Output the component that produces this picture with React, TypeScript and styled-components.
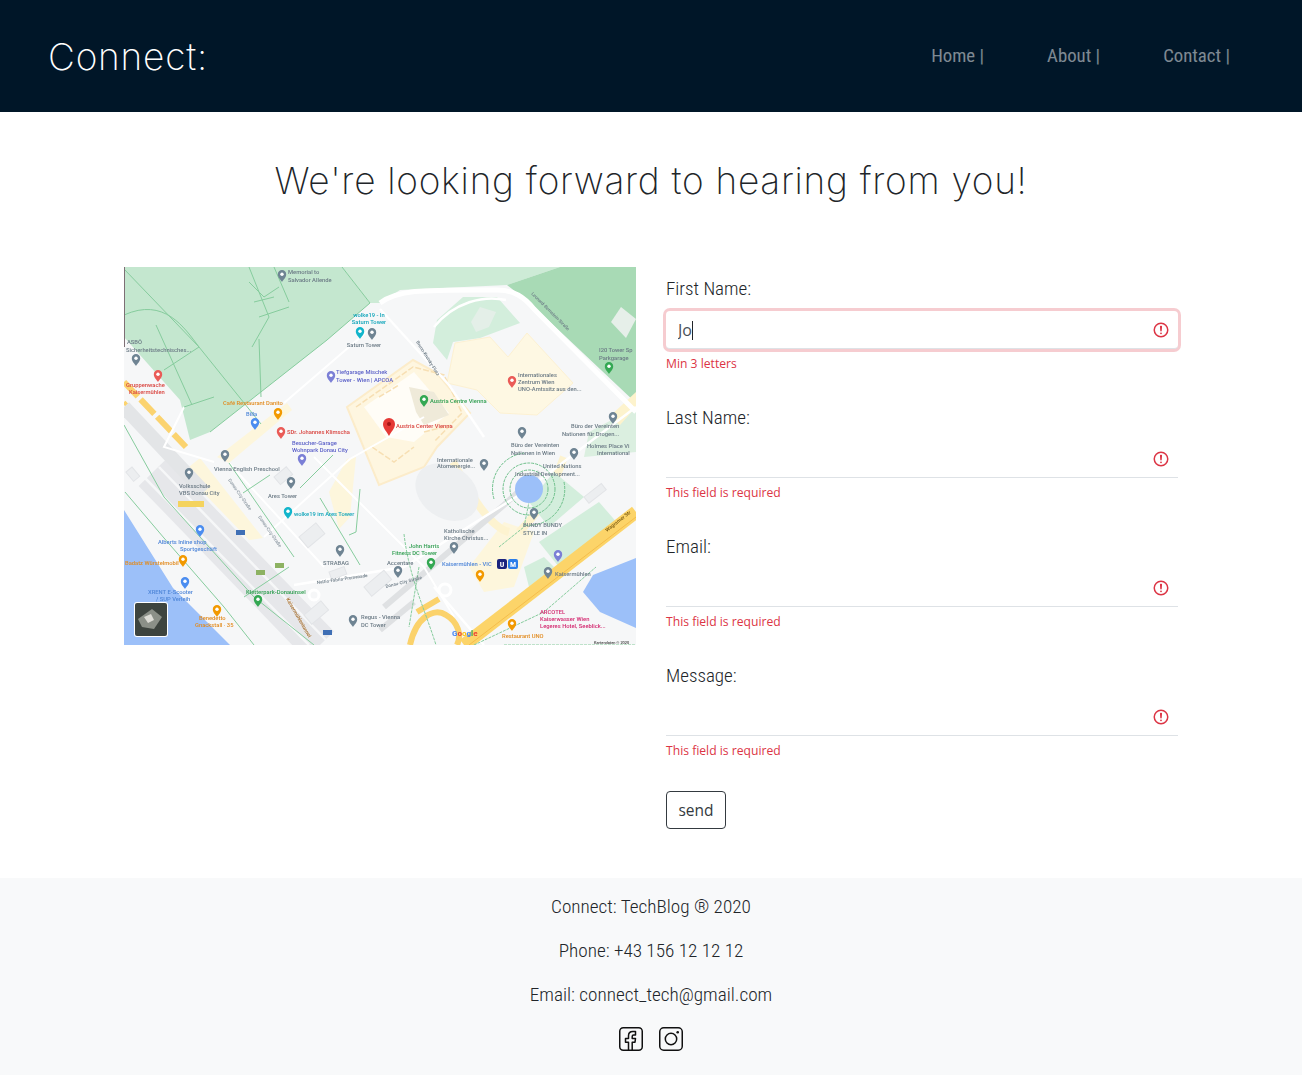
import React from "react";
import styled, { createGlobalStyle } from "styled-components";

const Global = createGlobalStyle`
  html, body { margin: 0; padding: 0; background: #fff; }
  body { font-family: "Roboto", sans-serif; font-weight: 300; font-stretch: 80%; color: #212529; }
  * { box-sizing: border-box; }
`;

const Header = styled.header`
  height: 112px;
  background: #001628;
  display: flex;
  align-items: center;
  justify-content: space-between;
  padding: 0 72px 0 48px;
`;
const Brand = styled.a`
  font-family: "Inter", sans-serif;
  font-weight: 200;
  font-stretch: normal;
  font-size: 37px;
  letter-spacing: 0.8px;
  color: #fff;
`;
const Nav = styled.nav`
  display: flex;
  gap: 63px;
`;
const NavItem = styled.a`
  font-size: 18.8px;
  font-weight: 400;
  color: rgba(255, 255, 255, 0.5);
`;
const Title = styled.h1`
  margin: 0;
  padding-top: 46px;
  height: 155px;
  text-align: center;
  font-family: "Inter", sans-serif;
  font-weight: 200;
  font-stretch: normal;
  font-size: 37px;
  letter-spacing: 0.72px;
  line-height: 46px;
  color: #212529;
`;
const Content = styled.main`
  display: grid;
  grid-template-columns: 512px 512px;
  column-gap: 30px;
  justify-content: center;
  height: 611px;
`;
const MapSvg = styled.svg`
  display: block;
  width: 512px;
  height: 378px;
  filter: blur(0.4px);
`;
const Form = styled.form`
  display: flex;
  flex-direction: column;
`;
const Group = styled.div`
  height: 129px;
  display: flex;
  flex-direction: column;
  padding-top: 10px;
`;
const Label = styled.label`
  font-size: 19px;
  line-height: 24px;
  margin-bottom: 10px;
  color: #212529;
`;
const InputWrap = styled.div`
  position: relative;
  height: 38px;
`;
const Input = styled.input<{ $focused?: boolean }>`
  display: block;
  width: 100%;
  height: 38px;
  border: 0;
  border-bottom: 1px solid #dee2e6;
  border-radius: ${(p) => (p.$focused ? "4px" : "0")};
  padding: 0 12px;
  outline: 0;
  background: #fff;
  font-family: "Open Sans", sans-serif;
  font-size: 16px;
  font-weight: 400;
  color: #495057;
  box-shadow: ${(p) => (p.$focused ? "0 0 0 3px rgba(220,53,69,.25)" : "none")};
`;
const Caret = styled.span`
  position: absolute;
  left: 26px;
  top: 10px;
  width: 1px;
  height: 19px;
  background: #212529;
`;
const Alert = styled.svg`
  position: absolute;
  right: 8px;
  top: 10px;
  width: 18px;
  height: 18px;
`;
const Feedback = styled.div`
  margin-top: 5px;
  font-family: "Open Sans", sans-serif;
  font-stretch: normal;
  font-weight: 400;
  font-size: 12.15px;
  line-height: 19px;
  color: #dc3545;
`;
const Send = styled.button`
  width: 60px;
  height: 38px;
  margin-top: 8px;
  padding: 0;
  background: #fff;
  border: 1px solid #343a40;
  border-radius: 4px;
  font-family: "Open Sans", sans-serif;
  font-size: 15.5px;
  color: #343a40;
`;
const Footer = styled.footer`
  height: 197px;
  background: #f8f9fa;
  padding-top: 17px;
  display: flex;
  flex-direction: column;
  align-items: center;
`;
const FootLine = styled.p`
  margin: 0 0 20px;
  font-size: 19.2px;
  line-height: 24px;
  color: #212529;
`;
const Socials = styled.div`
  display: flex;
  gap: 16px;
`;
const Social = styled.svg`
  width: 24px;
  height: 24px;
  fill: none;
  stroke: #111;
  stroke-width: 1.5;
  stroke-linejoin: round;
`;

const pinColors = {
  gray: "#6f8493", red: "#ea5b57", green: "#34a853", blue: "#4b8df0",
  orange: "#f29900", teal: "#12b5cb", indigo: "#7b7fd6", pink: "#e8457e",
};
const textColors = {
  gray: "#6b7a85", red: "#d9443f", green: "#2f9e50", blue: "#4f86d8",
  orange: "#e28b1f", teal: "#10a5ba", indigo: "#5b60c8", pink: "#d3266e",
};
const pins: [number, number, keyof typeof pinColors][] = [
  [158, 8, "gray"], [236, 65, "teal"], [248, 66, "gray"], [12, 92, "gray"], [34, 108, "red"],
  [207, 109, "indigo"], [154, 146, "orange"], [131, 156, "blue"], [157, 165, "red"], [101, 188, "gray"],
  [178, 192, "indigo"], [65, 206, "gray"], [167, 215, "gray"], [164, 245, "teal"], [76, 263, "blue"],
  [216, 283, "gray"], [59, 293, "orange"], [61, 315, "blue"], [134, 333, "green"], [93, 343, "orange"],
  [229, 353, "gray"], [388, 114, "red"], [300, 133, "green"], [398, 165, "gray"], [489, 150, "gray"],
  [485, 100, "green"], [450, 186, "gray"], [360, 197, "gray"], [410, 246, "gray"], [330, 280, "gray"],
  [307, 296, "green"], [274, 304, "gray"], [356, 308, "orange"], [434, 288, "indigo"], [424, 305, "gray"],
  [388, 357, "orange"],
];
const labels: [number, number, string, keyof typeof textColors, "start" | "middle"?][] = [
  [164, 7, "Memorial to", "gray"], [164, 15, "Salvador Allende", "gray"],
  [245, 50, "wolke19 - In", "teal", "middle"], [245, 57, "Saturn Tower", "teal", "middle"],
  [240, 80, "Saturn Tower", "gray", "middle"], [3, 77, "ASBÖ", "gray"], [2, 85, "Sicherheitstechnisches...", "gray"],
  [2, 120, "Gruppenwache", "red"], [5, 127, "Kaisermühlen", "red"],
  [212, 107, "Tiefgarage Mischek", "indigo"], [212, 115, "Tower - Wien | APCOA", "indigo"],
  [99, 138, "Café Restaurant Danito", "orange"], [122, 149, "Billa", "blue"],
  [163, 167, "SDr. Johannes Klimscha", "red"], [168, 178, "Besucher-Garage", "indigo"], [168, 185, "Wohnpark Donau City", "indigo"],
  [394, 110, "Internationales", "gray"], [394, 117, "Zentrum Wien", "gray"], [394, 124, "UNO-Amtssitz aus den...", "gray"],
  [306, 136, "Austria Centre Vienna", "green"], [272, 161, "Austria Center Vienna", "red"],
  [475, 85, "I20 Tower Sp", "gray"], [475, 93, "Parkgarage", "gray"], [447, 161, "Büro der Vereinten", "gray"],
  [438, 169, "Nationen für Drogen...", "gray"], [387, 180, "Büro der Vereinten", "gray"], [387, 188, "Nationen in Wien", "gray"],
  [463, 181, "Holmes Place Vi", "gray"], [473, 188, "International", "gray"],
  [90, 204, "Vienna English Preschool", "gray"], [55, 221, "Volksschule", "gray"], [55, 228, "VBS Donau City", "gray"],
  [144, 231, "Ares Tower", "gray"], [170, 249, "wolke19 im Ares Tower", "teal"],
  [34, 277, "Alberts Inline shop", "blue"], [56, 284, "Sportgeschäft", "blue"], [1, 298, "Badatz Würstelmobil", "orange"],
  [24, 327, "XRENT E-Scooter", "blue"], [32, 334, "/ SUP Verleih", "blue"], [75, 353, "Benedetto", "orange"], [71, 360, "Gnackstall · 35", "orange"],
  [199, 298, "STRABAG", "gray"], [122, 327, "Kletterpark-Donauinsel", "green"], [237, 352, "Regus - Vienna", "gray"], [237, 360, "DC Tower", "gray"],
  [313, 195, "Internationale", "gray"], [313, 201, "Atomenergie...", "gray"], [419, 201, "United Nations", "gray"], [391, 209, "Industrial Development...", "gray"],
  [399, 260, "BUNDY BUNDY", "gray"], [399, 268, "STYLE IN", "gray"], [320, 266, "Katholische", "gray"], [320, 273, "Kirche Christus...", "gray"],
  [285, 281, "John Harris", "green"], [268, 288, "Fitness DC Tower", "green"], [263, 298, "Accentare", "gray"],
  [318, 299, "Kaisermühlen - VIC", "blue"], [431, 309, "Kaisermühlen", "gray"], [416, 347, "ARCOTEL", "pink"], [416, 354, "Kaiserwasser Wien", "pink"], [416, 361, "Legeres Hotel, Seeblick...", "pink"],
  [378, 371, "Restaurant UNO", "orange"],
];

const Pin = ({ x, y, c }: { x: number; y: number; c: string }) => (
  <g transform={`translate(${x} ${y})`}>
    <path d="M0 7C-1.500 4.400-4.200 2.600-4.200-.8a4.200 4.200 0 0 1 8.400 0C4.200 2.600 1.500 4.400 0 7Z" fill={c} />
    <circle cy="-0.8" r="1.700" fill="#fff" />
  </g>
);

const MapDrawing = () => (
  <MapSvg viewBox="0 0 512 378" role="img" aria-label="Map of Kaisermühlen, Vienna">
    <rect width="512" height="378" fill="#f6f7f8" />
    <polygon points="0,0 218,0 246,36 203,73 86,165 66,173 56,133 0,70" fill="#c4e7cf" />
    <polygon points="256,0 436,0 383,18 276,23 256,36 246,36 218,0" fill="#cdebd6" />
    <polygon points="383,18 436,0 512,0 512,136 406,36" fill="#a8dab5" />
    <polygon points="487,55 497,40 512,52 502,71" fill="#e6efe9" />
    <polygon points="309,76 313,53 339,30 373,30 396,56 356,71 329,75 323,93" fill="#d3eedc" />
    <polygon points="356,40 372,45 365,60 352,65 347,55" fill="#e4efe8" />
    <polygon points="323,116 331,76 366,70 384,90 403,66 449,116 413,148 376,146 353,123" fill="#fef8e3" stroke="#fdf1d2" />
    <polygon points="223,140 289,93 313,106 346,146 313,180 300,200 255,218" fill="#fef6e0" stroke="#fcecca" strokeWidth="2" />
    <polygon points="240,140 290,105 325,146 290,175 262,170" fill="#fffdf7" />
    <polygon points="285,120 310,125 325,148 300,158 292,145" fill="#efead9" />
    <path d="M232 140 289 100 320 108 338 146 310 175M248 180 270 195 290 180M255 130 275 118M300 165 320 160" fill="none" stroke="#f7dfb3" strokeWidth="1.500" strokeDasharray="6 2" />
    <polygon points="93,190 163,136 168,143 105,196" fill="#fdf6dc" />
    <polygon points="39,221 76,191 139,271 93,278" fill="#fdf6dc" />
    <polygon points="205,225 223,192 232,190 226,250 215,262" fill="#fdf6dc" />
    <polygon points="380,255 410,265 390,320 360,325 345,300" fill="#fdf6dc" />
    <path d="M329 195C345 225 365 260 385 265M440 190C430 215 425 235 395 265" fill="none" stroke="#fdf3d0" strokeWidth="8" />
    <polygon points="430,205 460,230 425,260 405,235" fill="#d3eedc" />
    <polygon points="415,275 475,235 495,258 435,300" fill="#d3eedc" />
    <polygon points="400,300 420,290 430,300 405,320" fill="#d3eedc" />
    <polygon points="465,165 512,140 512,185 460,190" fill="#dbefe0" />
    <polygon points="485,150 512,125 512,140 496,158" fill="#fdf3cd" />
    <ellipse cx="323" cy="225" rx="34" ry="26" transform="rotate(35 323 225)" fill="#edeff1" />
    <polygon points="0,243 49,321 106,378 0,378" fill="#9cc0f9" />
    <polygon points="512,291 469,308 459,325 476,345 512,361" fill="#9cc0f9" />
    <path d="M29 205 196 378" stroke="#e6e7ea" strokeWidth="40" fill="none" />
    <path d="M35 200 202 373M20 210 185 378M48 195 215 368" stroke="#f6f7f8" strokeWidth="2.500" fill="none" />
    <path d="M0 115 62 180" stroke="#fbd36f" strokeWidth="6" strokeDasharray="20 4" fill="none" />
    <path d="M0 135 40 178" stroke="#fbd36f" strokeWidth="4" strokeDasharray="16 4" fill="none" />
    <path d="M0 140 80 225" stroke="#e3e5e7" strokeWidth="14" fill="none" />
    <path d="M260 340 380 238 416 205M256 363 290 335" stroke="#dfe1e3" strokeWidth="6" fill="none" />
    <path d="M256 36C275 22 300 23 373 23 390 23 400 30 410 42L512 145" stroke="#fff" strokeWidth="5" fill="none" />
    <path d="M256 42 325 118 360 170M310 60C330 35 360 28 382 33" stroke="#fff" strokeWidth="2.500" fill="none" />
    <path d="M160 136 246 62M60 140 40 180 90 195M140 270 226 192 300 150M190 190 240 240 300 300 330 350M105 196 200 300" stroke="#fff" strokeWidth="2" fill="none" />
    <path d="M170 318 280 300 320 275 400 225 512 140M310 320 360 378" stroke="#fff" strokeWidth="2.500" fill="none" />
    <g fill="#eceef0" stroke="#e2e4e7">
      <rect x="150" y="210" width="16" height="10" transform="rotate(-40 150 210)" />
      <rect x="175" y="270" width="22" height="14" transform="rotate(-40 175 270)" />
      <rect x="205" y="305" width="16" height="8" transform="rotate(-20 205 305)" />
      <rect x="240" y="320" width="26" height="12" transform="rotate(-40 240 320)" />
      <rect x="180" y="348" width="22" height="12" transform="rotate(-40 180 348)" />
      <rect x="460" y="230" width="22" height="8" transform="rotate(-38 460 230)" />
      <rect x="8" y="200" width="12" height="8" transform="rotate(50 8 200)" />
    </g>
    <circle cx="190" cy="328" r="5" fill="none" stroke="#fff" strokeWidth="3" />
    <circle cx="321" cy="323" r="6" fill="none" stroke="#fff" strokeWidth="3" />
    <path d="M512 245 340 378" stroke="#fcd469" strokeWidth="13" fill="none" />
    <path d="M512 250 345 378" stroke="#f5bd4a" strokeWidth="1" fill="none" />
    <path d="M286 378C292 350 310 340 322 348 334 355 338 368 333 378M293 345 315 332" stroke="#fbd26b" strokeWidth="6" fill="none" />
    <path d="M0 2 75 80 137 157M125 0 145 50 128 80M150 0 165 35M218 0 246 36 203 73 86 165M0 48C40 30 60 60 75 80M75 80 40 103M32 58 68 138M90 130 60 140M135 72 137 130M0 158 40 230 130 330 190 378M105 196 170 290M125 15 140 30 155 20M130 35 150 30M135 50 165 40M1 225 40 271 100 340 130 378M119 226 146 208M176 221 209 188M196 231 236 298M236 222 232 265 225 268M120 330 165 300" stroke="#86cc9d" strokeWidth="1" fill="none" />
    <path d="M280 267C285 310 300 340 312 378M350 378 420 345 472 300M410 210 400 260 375 280M295 300 285 360M380 378H512" stroke="#86cc9d" strokeWidth="1" fill="none" strokeDasharray="3 1" />
    <circle cx="405" cy="222" r="14" fill="#9cc0f9" />
    <g fill="none" stroke="#6cbf89" strokeDasharray="3 1">
      <circle cx="405" cy="222" r="19" />
      <circle cx="405" cy="222" r="26" />
      <path d="M370 232A36 36 0 0 1 400 186M440 215A36 36 0 0 1 400 258" />
    </g>
    {pins.map(([x, y, c]) => <Pin key={`${x}-${y}`} x={x} y={y} c={pinColors[c]} />)}
    <g transform="translate(265 157)">
      <path d="M0 12C-2 7.600-6 5-6 0a6 6 0 0 1 12 0C6 5 2 7.600 0 12Z" fill="#e53935" />
      <circle r="2" fill="#a31515" />
    </g>
    <g fontFamily="'Roboto', sans-serif" fontSize="5.800" fontWeight="500" style={{ fontStretch: "100%" }}>
      {labels.map(([x, y, t, c, a]) => (
        <text key={`${x}-${y}`} x={x} y={y} fill={textColors[c]} textAnchor={a ?? "start"}>{t}</text>
      ))}
      <text x="470" y="377" fontSize="3.900" fill="#444">Kartendaten © 2020</text>
      <text x="407" y="27" transform="rotate(45 407 27)" fontSize="4.500" fill="#6b7a85">Leonard-Bernstein-Straße</text>
      <text x="292" y="75" transform="rotate(58 292 75)" fontSize="4.500" fill="#6b7a85">Bruno-Kreisky-Platz</text>
      <text x="104" y="213" transform="rotate(55 104 213)" fontSize="4.500" fill="#8a96a0">Donau-City-Straße</text>
      <text x="134" y="250" transform="rotate(55 134 250)" fontSize="4.500" fill="#8a96a0">Donau-City-Straße</text>
      <text x="193" y="317" transform="rotate(-8 193 317)" fontSize="4.500" fill="#6b7a85">Nattio-Fabria-Promenade</text>
      <text x="262" y="321" transform="rotate(-14 262 321)" fontSize="4.500" fill="#6b7a85">Donau-City-Straße</text>
      <text x="162" y="332" transform="rotate(60 162 332)" fontSize="5" fill="#a56a25">Kaisermühlentunnel</text>
      <text x="483" y="265" transform="rotate(-38 483 265)" fontSize="5" fill="#7a5a10">Wagramer Str</text>
      <text x="328" y="369" fontSize="8" fontWeight="700" fill="#4285f4">G<tspan fill="#ea4335">o</tspan><tspan fill="#fbbc05">o</tspan><tspan fill="#4285f4">g</tspan><tspan fill="#34a853">l</tspan><tspan fill="#ea4335">e</tspan></text>
    </g>
    <rect x="54" y="234" width="26" height="6" fill="#f4d35e" />
    <rect x="373" y="292" width="10" height="10" rx="2" fill="#1a237e" />
    <rect x="384" y="292" width="10" height="10" rx="2" fill="#2b7de9" />
    <g fontFamily="'Roboto', sans-serif" fontSize="8" fontWeight="700" fill="#fff" textAnchor="middle">
      <text x="378" y="300">U</text>
      <text x="389" y="300">M</text>
    </g>
    <rect x="112" y="263" width="9" height="5" fill="#3f6fb5" />
    <rect x="132" y="303" width="9" height="5" fill="#8db262" />
    <rect x="151" y="296" width="9" height="5" fill="#8db262" />
    <rect x="199" y="363" width="9" height="5" fill="#3f6fb5" />
    <rect x="10" y="335" width="34" height="35" rx="3" fill="#fff" />
    <rect x="11" y="336" width="32" height="33" rx="2" fill="#3d443f" />
    <path d="M14 352 28 342 38 350 30 362 18 360Z" fill="#8b9088" />
    <path d="M20 350 27 347 30 353 24 356Z" fill="#dcdcd6" />
    <rect width="1" height="80" fill="#7e6f75" />
  </MapSvg>
);

const AlertIcon = () => (
  <Alert viewBox="0 0 12 12" fill="none" stroke="#dc3545">
    <circle cx="6" cy="6" r="4.500" />
    <path strokeLinejoin="round" d="M5.800 3.600h.4L6 6.500z" />
    <circle cx="6" cy="8.200" r=".6" fill="#dc3545" stroke="none" />
  </Alert>
);

const fields = [
  { id: "first", label: "First Name:", value: "Jo", error: "Min 3 letters" },
  { id: "last", label: "Last Name:", value: "", error: "This field is required" },
  { id: "email", label: "Email:", value: "", error: "This field is required" },
  { id: "message", label: "Message:", value: "", error: "This field is required" },
];

export default function App() {
  return (
    <>
      <Global />
      <Header>
        <Brand>Connect:</Brand>
        <Nav>
          <NavItem>Home |</NavItem>
          <NavItem>About |</NavItem>
          <NavItem>Contact |</NavItem>
        </Nav>
      </Header>
      <Title>We're looking forward to hearing from you!</Title>
      <Content>
        <MapDrawing />
        <Form>
          {fields.map((f) => (
            <Group key={f.id}>
              <Label htmlFor={f.id}>{f.label}</Label>
              <InputWrap>
                <Input id={f.id} readOnly value={f.value} $focused={!!f.value} />
                {f.value && <Caret />}
                <AlertIcon />
              </InputWrap>
              <Feedback>{f.error}</Feedback>
            </Group>
          ))}
          <Send type="button">send</Send>
        </Form>
      </Content>
      <Footer>
        <FootLine>Connect: TechBlog ® 2020</FootLine>
        <FootLine>Phone: +43 156 12 12 12</FootLine>
        <FootLine>Email: connect_tech@gmail.com</FootLine>
        <Socials>
          <Social viewBox="0 0 24 24" aria-label="Facebook">
            <rect x=".75" y=".75" width="22.500" height="22.500" rx="3.500" />
            <path d="M9.500 23.200V15.200H6.500V11.500h3V8.800C9.500 6 11.200 4.500 13.800 4.500h2.700V8h-1.900c-1 0-1.400.5-1.400 1.400v2.100h3.300l-.5 3.700h-2.800v8" />
          </Social>
          <Social viewBox="0 0 24 24" aria-label="Instagram">
            <rect x=".75" y=".75" width="22.500" height="22.500" rx="4" />
            <circle cx="12" cy="12" r="5.700" />
            <circle cx="18.700" cy="5.200" r="1.300" fill="#111" stroke="none" />
          </Social>
        </Socials>
      </Footer>
    </>
  );
}
